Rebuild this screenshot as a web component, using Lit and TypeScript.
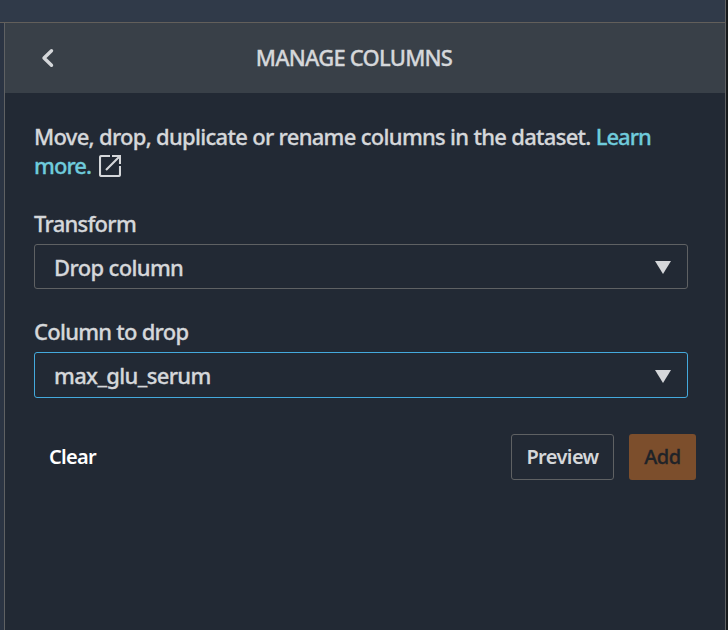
import { LitElement, html, css } from "lit";
import { customElement, property } from "lit/decorators.js";

@customElement("select-field")
export class SelectField extends LitElement {
  @property() label = "";
  @property() value = "";
  @property({ type: Boolean, reflect: true }) active = false;

  static styles = css`
    :host { display: block; width: 654px; }
    .label { height: 29px; line-height: 29px; letter-spacing: -0.74px; margin: 0 0 6px; }
    .box {
      box-sizing: border-box; height: 45px; padding: 0 16px 0 19px;
      display: flex; align-items: center; justify-content: space-between;
      border: 1px solid #5f6163; border-radius: 3px;
    }
    :host([active]) .box { height: 46px; border-color: #44a9dc; }
    .value { line-height: 29px; letter-spacing: -0.65px; padding-top: 2px; }
    :host([active]) .value { padding-top: 0; }
    svg { display: block; width: 16px; height: 13px; margin-top: 2px; }
  `;

  render() {
    return html`
      <div class="label">${this.label}</div>
      <div class="box">
        <span class="value">${this.value}</span>
        <svg viewBox="0 0 16 13"><path d="M0 0H16L8 13Z" fill="#d5d7da" /></svg>
      </div>
    `;
  }
}

@customElement("app-root")
export class AppRoot extends LitElement {
  static styles = css`
    :host {
      display: flex; flex-direction: column; box-sizing: border-box;
      width: 728px; height: 630px; overflow: hidden;
      background: #2b3443; color: #d5d7da;
      border-right: 2px solid #16191b;
      font: 500 22px "Noto Sans", sans-serif; white-space: nowrap;
      -webkit-text-stroke: 0.3px currentColor;
    }
    .top { height: 22px; flex: none; background: #303a49; border-right: 1px solid #5f6163; border-bottom: 1px solid #625f5b; }
    .panel { flex: 1; margin-left: 4px; background: #222934; border: solid #5f6163; border-width: 0 1px; }
    header {
      height: 70px; background: #394048; display: flex; align-items: center;
      position: relative; justify-content: center;
    }
    .back { position: absolute; left: 36px; top: 25px; width: 14px; height: 20px; }
    h1 { margin: 0 22px 2px 0; font: inherit; line-height: 29px; letter-spacing: -0.8px; }
    .body { padding: 29px 0 0 29px; }
    p { margin: 0; line-height: 29px; letter-spacing: -0.7px; height: 58px; }
    .link { color: #6fcbdc; }
    .learn { letter-spacing: -0.95px; }
    .ext { width: 22px; height: 22px; vertical-align: -3px; margin-left: 3px; }
    .first { margin-top: 29px; }
    .second { margin-top: 28px; }
    .actions { margin-top: 36px; width: 662px; display: flex; align-items: stretch; height: 46px; }
    button {
      font: 500 20px "Noto Sans", sans-serif; color: inherit; background: none;
      border: 1px solid transparent; border-radius: 3px; padding: 0 0 2px; letter-spacing: -0.4px;
    }
    .clear { color: #fff; font-weight: 600; width: 77px; margin-right: auto; letter-spacing: -0.7px; -webkit-text-stroke: 0; }
    .preview { width: 103px; border-color: #5f6163; margin-right: 15px; font-weight: 600; letter-spacing: -0.6px; -webkit-text-stroke: 0; }
    .add { width: 67px; background: #7c4e2c; color: #1f2328; }
  `;

  render() {
    return html`
      <div class="top"></div>
      <div class="panel">
        <header>
          <svg class="back" viewBox="0 0 14 20">
            <path d="M10.5 2.7L3 10L10.5 17.3" fill="none" stroke="#d5d7da" stroke-width="3.4" stroke-linecap="round" stroke-linejoin="round" />
          </svg>
          <h1>MANAGE COLUMNS</h1>
        </header>
        <div class="body">
          <p>
            Move, drop, duplicate or rename columns in the dataset. <span class="link learn">Learn</span><br />
            <span class="link learn">more.</span>
            <svg class="ext" viewBox="0 0 22 22" fill="none" stroke="#d5d7da" stroke-width="2.1">
              <path d="M11 1H2.5Q1 1 1 2.5V19.5Q1 21 2.5 21H19.5Q21 21 21 19.5V11M13 1H21V9M21 1L7 15" />
            </svg>
          </p>
          <select-field class="first" label="Transform" value="Drop column"></select-field>
          <select-field class="second" label="Column to drop" value="max_glu_serum" active></select-field>
          <div class="actions">
            <button class="clear">Clear</button>
            <button class="preview">Preview</button>
            <button class="add">Add</button>
          </div>
        </div>
      </div>
    `;
  }
}
